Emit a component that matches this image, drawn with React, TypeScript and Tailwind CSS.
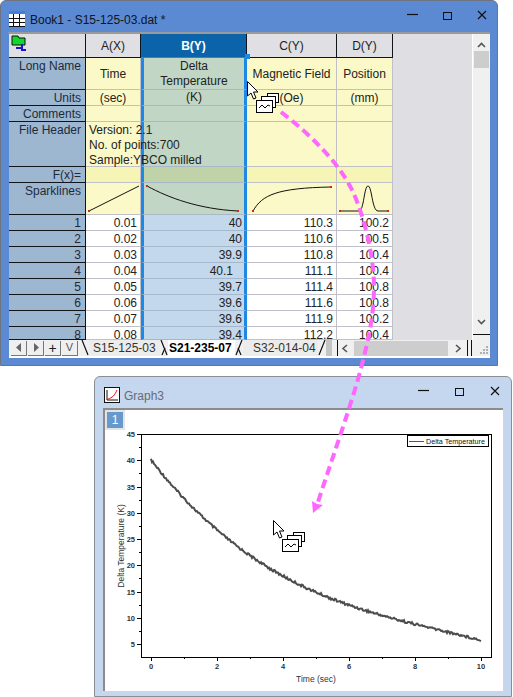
import React from 'react';

const rows = [
  ['1', '0.01', '40', '110.3', '100.2'],
  ['2', '0.02', '40', '110.6', '100.5'],
  ['3', '0.03', '39.9', '110.8', '100.4'],
  ['4', '0.04', '40.1', '111.1', '100.4'],
  ['5', '0.05', '39.7', '111.4', '100.8'],
  ['6', '0.06', '39.6', '111.6', '100.8'],
  ['7', '0.07', '39.6', '111.9', '100.2'],
  ['8', '0.08', '39.4', '112.2', '100.4'],
];

const meta = [
  { label: 'Long Name', h: 'h-[32px]', a: 'Time', b: 'Delta\nTemperature', c: 'Magnetic Field', d: 'Position' },
  { label: 'Units', h: 'h-[16px]', a: '(sec)', b: '(K)', c: '(Oe)', d: '(mm)' },
  { label: 'Comments', h: 'h-[16px]', a: '', b: '', c: '', d: '' },
];

const RowHead = ({ children, h }: { children: React.ReactNode; h: string }) => (
  <div className={`${h} overflow-hidden bg-[#9db7d1] border-b border-r border-[#10151c] pr-[4px] text-right leading-[16px] text-[#1d2a3a]`}>
    {children}
  </div>
);

const ColHead = ({ children, active }: { children: React.ReactNode; active?: boolean }) => (
  <div
    className={`h-[24px] flex items-center justify-center border-b border-r border-[#10151c] ${
      active ? 'bg-[#0b64aa] text-white font-bold border-b-[#1e88e5]' : 'bg-[#e0dfe4] text-[#222]'
    }`}
  >
    {children}
  </div>
);

// slanted tab edge
const Slant = ({ flip, both }: { flip?: boolean; both?: boolean }) => (
  <svg width="8" height="16" className="shrink-0">
    <path d={flip ? 'M7 0 L1 15' : 'M1 0 L7 15'} stroke="#111" strokeWidth="1.2" fill="none" />
    {both && <path d={flip ? 'M3 8 L6 15' : 'M5 8 L2 15'} stroke="#111" strokeWidth="1.2" fill="none" />}
  </svg>
);

const NavBtn = ({ children }: { children: React.ReactNode }) => (
  <div className="w-[16px] h-[15px] flex items-center justify-center bg-[#efefef] border-r border-b border-[#777] text-[#222] text-[14px] leading-none">
    {children}
  </div>
);

const WinControls = ({ gap }: { gap: string }) => (
  <div className={`flex items-center mt-[9px] ${gap}`}>
    <svg width="11" height="10"><path d="M0 4.5 H11" stroke="#111" strokeWidth="1.2" /></svg>
    <svg width="9" height="9"><rect x="0.5" y="1.5" width="8" height="7" fill="none" stroke="#111" /></svg>
    <svg width="10" height="10"><path d="M1 1 L9 9 M9 1 L1 9" stroke="#111" strokeWidth="1.2" /></svg>
  </div>
);

const Sheet = () => (
  <div className="flex-1 flex flex-col min-h-0">
    <div className="flex h-[306px] overflow-hidden">
      <div className="grid grid-cols-[77px_55px_106px_90px_56px] content-start w-[384px] shrink-0">
        <div className="h-[24px] bg-[#e0dfe4] border-b border-r border-[#10151c] pl-[2px] pt-[1px]">
          <svg width="17" height="17">
            <path d="M1 1 H7 L8 3 H14 V10 H1 Z" fill="#12d62c" stroke="#111" />
            <path d="M5 13 H11 M11 9 V15 H15" stroke="#1616c8" strokeWidth="2" fill="none" />
          </svg>
        </div>
        <ColHead>A(X)</ColHead>
        <ColHead active>B(Y)</ColHead>
        <ColHead>C(Y)</ColHead>
        <ColHead>D(Y)</ColHead>

        {meta.map((m) => (
          <React.Fragment key={m.label}>
            <RowHead h={m.h}>{m.label}</RowHead>
            <Yellow h={m.h}>{m.a}</Yellow>
            <Yellow h={m.h} sel>
              <span className="whitespace-pre-line text-center leading-[15px]">{m.b}</span>
            </Yellow>
            <Yellow h={m.h}>{m.c}</Yellow>
            <Yellow h={m.h}>{m.d}</Yellow>
          </React.Fragment>
        ))}

        <RowHead h="h-[45px]">File Header</RowHead>
        <div className="col-span-4 h-[45px] grid grid-cols-[55px_106px_90px_56px] relative">
          <div className="bg-[#fbf9c8] border-b border-r border-[#c0c0c8]" />
          <div className="bg-[#c1d6c4] border-b border-x-[3px] border-x-[#1e88e5] border-b-[#a8b8c8]" />
          <div className="bg-[#fbf9c8] border-b border-r border-[#c0c0c8]" />
          <div className="bg-[#fbf9c8] border-b border-r border-[#c0c0c8]" />
          <div className="absolute left-[3px] top-[1px] leading-[15px] text-[#222] whitespace-pre-line">
            {'Version: 2.1\nNo. of points:700\nSample:YBCO milled'}
          </div>
        </div>

        <RowHead h="h-[16px]">F(x)=</RowHead>
        <div className="h-[16px] bg-[#f7f5b5] border-b border-r border-[#c0c0c8]" />
        <div className="h-[16px] bg-[#c0d2a8] border-b border-x-[3px] border-x-[#1e88e5] border-b-[#a8b8c8]" />
        <div className="h-[16px] bg-[#f7f5b5] border-b border-r border-[#c0c0c8]" />
        <div className="h-[16px] bg-[#f7f5b5] border-b border-r border-[#c0c0c8]" />

        <RowHead h="h-[32px]">Sparklines</RowHead>
        <Spark d="M3 28 L53 3" end={[[3, 28]]} />
        <Spark sel d="M3 3 C25 15 55 26 94 28" end={[[3, 3], [94, 28]]} />
        <Spark d="M6 28 C15 12 30 5 84 4" end={[[6, 28], [84, 4]]} />
        <Spark d="M3 28 H22 C27 28 27 3 31 3 C35 3 35 28 41 28 H51" end={[[3, 28], [51, 28]]} />

        {rows.map((r, i) => {
          const h = i === 7 ? 'h-[13px]' : 'h-[16px]';
          return (
            <React.Fragment key={r[0]}>
              <RowHead h={h}>{r[0]}</RowHead>
              <Num h={h}>{r[1]}</Num>
              <Num h={h} sel extra={r[2] === '40.1' ? 'pr-[11px]' : ''}>{r[2]}</Num>
              <Num h={h}>{r[3]}</Num>
              <Num h={h}>{r[4]}</Num>
            </React.Fragment>
          );
        })}
      </div>
      <div className="flex-1 bg-[#dfdee3]" />
      <div className="w-[18px] bg-[#f0f0f0] border-l border-white flex flex-col items-center relative">
        <svg width="9" height="6" className="mt-[8px]"><path d="M1 5 L4.5 1.5 L8 5" stroke="#555" strokeWidth="1.6" fill="none" /></svg>
        <div className="w-[15px] h-[17px] bg-[#cdcdcd] mt-[3px]" />
        <div className="flex-1" />
        <svg width="9" height="6" className="mb-[9px]"><path d="M1 1 L4.5 4.5 L8 1" stroke="#555" strokeWidth="1.6" fill="none" /></svg>
        <div className="w-full h-[1px] bg-[#111] mb-[5px]" />
      </div>
    </div>

    <div className="h-[16px] flex items-center bg-[#f0f0f0] text-[#222]">
      <div className="flex w-[70px] ml-[2px] gap-[1px] shrink-0">
        <NavBtn><svg width="6" height="9"><path d="M5 0 V9 L0 4.5 Z" fill="#666" /></svg></NavBtn>
        <NavBtn><svg width="6" height="9"><path d="M1 0 V9 L6 4.5 Z" fill="#666" /></svg></NavBtn>
        <NavBtn>+</NavBtn>
        <NavBtn><span className="text-[11px] text-[#555]">V</span></NavBtn>
      </div>
      <div className="flex items-center h-full w-[251px] shrink-0">
        <Slant />
        <div className="w-[71px] h-full flex items-center pl-[4px] bg-[#ececec] text-[#333]">S15-125-03</div>
        <Slant both />
        <div className="w-[67px] h-full flex items-center pl-[1px] bg-white font-bold text-black">S21-235-07</div>
        <Slant flip both />
        <div className="w-[75px] h-full flex items-center pl-[10px] bg-[#ececec] text-[#333]">S32-014-04</div>
        <Slant flip />
        <div className="w-[6px] h-full bg-[#c4c4c4]" />
      </div>
      <div className="w-[1px] h-full bg-[#111] ml-[5px] shrink-0" />
      <div className="flex-1 flex items-center h-full pl-[3px]">
        <svg width="7" height="9" className="shrink-0"><path d="M6 1 L2 4.5 L6 8" stroke="#555" strokeWidth="1.6" fill="none" /></svg>
        <div className="w-[94px] h-[15px] bg-[#cdcdcd] ml-[6px] shrink-0" />
        <svg width="7" height="9" className="ml-[7px] shrink-0"><path d="M1 1 L5 4.5 L1 8" stroke="#555" strokeWidth="1.6" fill="none" /></svg>
      </div>
      <div className="w-[1px] h-full bg-[#111] mr-[3px] shrink-0" />
      <div className="w-[1px] h-full bg-[#111] shrink-0" />
      <div className="w-[18px] h-full flex items-end justify-end p-[2px] shrink-0">
        <svg width="9" height="9" fill="#b0b0b0">
          <rect x="7" y="1" width="2" height="2" /><rect x="4" y="4" width="2" height="2" /><rect x="7" y="4" width="2" height="2" />
          <rect x="1" y="7" width="2" height="2" /><rect x="4" y="7" width="2" height="2" /><rect x="7" y="7" width="2" height="2" />
        </svg>
      </div>
    </div>
  </div>
);

const Yellow = ({ children, h, sel }: { children: React.ReactNode; h: string; sel?: boolean }) => (
  <div
    className={`${h} flex items-center justify-center text-[#222] border-b ${
      sel ? 'bg-[#c1d6c4] border-x-[3px] border-x-[#1e88e5] border-b-[#a8b8c8]' : 'bg-[#fbf9c8] border-r border-[#c0c0c8]'
    }`}
  >
    {children}
  </div>
);

const Num = ({ children, h, sel, extra = '' }: { children: React.ReactNode; h: string; sel?: boolean; extra?: string }) => (
  <div
    className={`${h} overflow-hidden text-right leading-[16px] text-[#222] border-b ${
      sel ? 'bg-[#c3d8eb] border-x-[3px] border-x-[#1e88e5] border-b-[#a3b8cc] pr-[2px]' : 'bg-white border-r border-[#c0c0c8] pr-[3px]'
    } ${extra}`}
  >
    {children}
  </div>
);

const Spark = ({ d, end, sel }: { d: string; end: number[][]; sel?: boolean }) => (
  <div className={`h-[32px] border-b ${sel ? 'bg-[#c1d6c4] border-x-[3px] border-x-[#1e88e5] border-b-[#a8b8c8]' : 'bg-[#fbf9c8] border-r border-[#c0c0c8]'}`}>
    <svg width="100" height="31" className="block">
      <path d={d} fill="none" stroke="#111" strokeWidth="1" />
      {end.map(([x, y], i) => (
        <rect key={i} x={x - 1} y={y - 1} width="2" height="2" fill="#e02020" />
      ))}
    </svg>
  </div>
);

// decay curve with fixed jitter, as measured data
const curve = () => {
  const pts: string[] = [];
  for (let i = 0; i <= 330; i += 1) {
    const t = i / 33;
    const base = 460 + 42.17 * t - 3.875 * t * t + 0.146 * t * t * t;
    const n = Math.sin(i * 12.9898) * 43758.5453;
    const jitter = (n - Math.floor(n) - 0.5) * 2.4;
    pts.push(`${151 + i},${(base + jitter).toFixed(1)}`);
  }
  return pts.join(' ');
};

const Chart = () => {
  const yMajor = [[45, 434], [40, 460], [35, 487], [30, 513], [25, 539], [20, 565], [15, 592], [10, 618], [5, 644]];
  const xMajor = [[0, 151], [2, 217], [4, 283], [6, 349], [8, 415], [10, 481]];
  return (
    <svg width="400" height="284" viewBox="103 408 400 284" className="block">
      <rect x="141.5" y="434.5" width="350" height="223" fill="none" stroke="#000" strokeWidth="1" />
      {yMajor.map(([v, y]) => (
        <g key={v}>
          <path d={`M137 ${y + 0.5} H141`} stroke="#000" />
          {v > 5 && <path d={`M139 ${y + 13.5} H141`} stroke="#000" />}
          <text x="135" y={y + 3} textAnchor="end" fontSize="7.5" fontWeight="700" fill="#333" fontFamily="Liberation Sans">{v}</text>
        </g>
      ))}
      {xMajor.map(([v, x]) => (
        <g key={v}>
          <path d={`M${x + 0.5} 657 V661`} stroke="#000" />
          {v < 10 && <path d={`M${x + 33.5} 657 V659`} stroke="#000" />}
          <text x={x} y="669" textAnchor="middle" fontSize="7.5" fontWeight="700" fill="#333" fontFamily="Liberation Sans">{v}</text>
        </g>
      ))}
      <polyline points={curve()} fill="none" stroke="#4c4c4c" strokeWidth="2" />
      <rect x="407.5" y="435.5" width="81" height="11" fill="#fff" stroke="#000" />
      <path d="M409 441.5 H424" stroke="#555" />
      <text x="426" y="444" fontSize="7.2" fill="#111" fontFamily="Liberation Sans">Delta Temperature</text>
      <text x="316" y="682" textAnchor="middle" fontSize="8.5" fill="#333" fontFamily="Liberation Sans">Time (sec)</text>
      <text transform="translate(124 546) rotate(-90)" textAnchor="middle" fontSize="8.5" fill="#333" fontFamily="Liberation Sans">Delta Temperature (K)</text>
    </svg>
  );
};

const DragCursor = ({ x, y }: { x: number; y: number }) => (
  <g transform={`translate(${x} ${y})`}>
    <path d="M0.5 0.5 V15 L4 12 L6.5 18 L9 17 L6.5 11 L11 11 Z" fill="#fff" stroke="#000" />
    <rect x="20.5" y="12.5" width="11" height="9" fill="#fff" stroke="#000" />
    <rect x="14.5" y="15.5" width="14" height="11" fill="#fff" stroke="#000" />
    <rect x="9.5" y="19.5" width="16" height="12" fill="#fff" stroke="#000" />
    <path d="M12 27 L15 24 L18 27 L21 24 L23 25" fill="none" stroke="#000" />
  </g>
);

const App: React.FC = () => {
  return (
    <div className="relative w-[513px] h-[697px] overflow-hidden bg-white font-['Liberation_Sans',Arial,sans-serif] text-[12px]">
      <div className="w-[498px] h-[366px] flex flex-col bg-[#5b8ad3] border border-[#6d7480] rounded-t-[6px] px-[7px] pb-[7px]">
        <div className="h-[31px] shrink-0 flex items-start pl-[1px] pr-[3px]">
          <svg width="16" height="16" className="mr-[5px] mt-[10px]">
            <rect width="16" height="3" fill="#3f7fe0" />
            <rect y="3" width="16" height="13" fill="#fff" />
            <path d="M0 7.5 H16 M0 11.5 H16 M0 15.5 H16 M4.5 3 V16 M10.5 3 V16" stroke="#111" />
          </svg>
          <span className="text-[#10141c] mt-[11px] leading-[16px]">Book1 - S15-125-03.dat *</span>
          <div className="flex-1" />
          <WinControls gap="gap-[25px]" />
        </div>
        <div className="flex-1 flex flex-col bg-white border-t-2 border-[#9a9a9a] border-l border-l-[#5b8ad3] pb-[2px] min-h-0">
          <Sheet />
        </div>
      </div>

      <div className="ml-[94px] mt-[10px] w-[418px] h-[321px] flex flex-col bg-[#c5d7ee] border border-[#8a8f96] rounded-t-[6px] px-[8px] pb-[5px]">
        <div className="h-[31px] shrink-0 flex items-start pl-[1px] pr-[3px]">
          <svg width="16" height="16" className="mr-[4px] mt-[10px]">
            <rect x="0.5" y="0.5" width="15" height="15" fill="#fff" stroke="#111" />
            <path d="M3 3 V13 H14" stroke="#111" fill="none" />
            <path d="M4 12 C8 11 11 8 13 3" stroke="#e01010" fill="none" />
          </svg>
          <span className="text-[#666c74] mt-[11px] leading-[16px]">Graph3</span>
          <div className="flex-1" />
          <WinControls gap="gap-[26px]" />
        </div>
        <div className="relative flex-1 bg-white border-t-2 border-l-2 border-[#8c8c8c] min-h-0 overflow-hidden">
          <div className="absolute left-0 top-0 w-[20px] h-[20px] border-2 border-[#e4e4e4] bg-[#6699cc] flex items-center justify-center text-white">1</div>
          <div className="-mt-[2px] -ml-[2px]"><Chart /></div>
        </div>
      </div>

      {/* overlays: selection handle, drag arrow and cursors */}
      <div className="absolute left-[245px] top-[54px] w-[5px] h-[5px] bg-[#1e88e5]" />
      <svg width="513" height="697" className="absolute left-0 top-0 pointer-events-none">
        <path
          d="M281 112 C312 136 340 164 353 192 C364 216 374 256 374 287 C374 316 368 342 360 372 C352 402 335 450 317 505"
          fill="none"
          stroke="#ff66ff"
          strokeWidth="4"
          strokeDasharray="9 5"
        />
        <path d="M313 513 L312 501 L317 504 L323 505 Z" fill="#ff66ff" />
        <DragCursor x={247} y={81} />
        <DragCursor x={273} y={520} />
      </svg>
    </div>
  );
};

export default App;
